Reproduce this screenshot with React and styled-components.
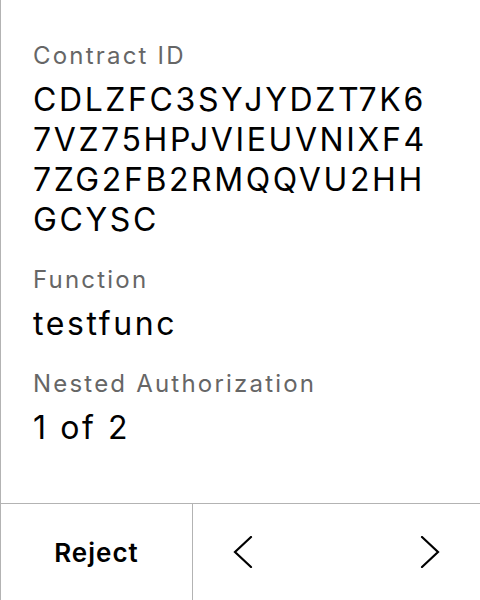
import styled, { createGlobalStyle } from 'styled-components'

const GlobalStyle = createGlobalStyle`
    html, body {
        margin: 0;
        padding: 0;
        background: #ffffff;
    }
    body {
        font-family: "Inter", "Noto Sans", sans-serif;
        -webkit-font-smoothing: antialiased;
    }
`

const Screen = styled.div`
    height: 600px;
    display: flex;
    flex-direction: column;
    border-left: 1px solid #b3b3b3;
    box-sizing: border-box;
    background: #ffffff;
`

const Details = styled.div`
    flex: 1;
    display: flex;
    flex-direction: column;
    gap: 24px;
    padding: 40px 36px 0 32px;
`

const Field = styled.div`
    display: flex;
    flex-direction: column;
    gap: 8px;
`

const Label = styled.div`
    font-size: 24px;
    line-height: 32px;
    letter-spacing: 2.2px;
    color: #666666;
`

const Value = styled.div`
    font-size: 32px;
    line-height: 40px;
    letter-spacing: 2.6px;
    color: #000000;
    word-break: break-all;
`

const Footer = styled.div`
    height: 96px;
    display: flex;
    border-top: 1px solid #b3b3b3;
`

const RejectButton = styled.button`
    width: 192px;
    border: none;
    border-right: 1px solid #b3b3b3;
    background: transparent;
    font-family: "Inter", sans-serif;
    font-size: 26px;
    font-weight: 600;
    letter-spacing: 1px;
    color: #000000;
    padding: 0;
`

const Pager = styled.div`
    flex: 1;
    display: flex;
    align-items: center;
    justify-content: space-between;
    padding: 0 34px;
`

const ArrowButton = styled.button`
    width: 32px;
    height: 32px;
    padding: 0;
    border: none;
    background: transparent;
    display: flex;
    align-items: center;
    justify-content: center;
`

function Chevron({ dir }) {
    const d = dir === 'left' ? 'M24 1 L8 16 L24 31' : 'M8 1 L24 16 L8 31'
    return (
        <svg width="32" height="32" viewBox="0 0 32 32" fill="none">
            <path d={d} stroke="#000" strokeWidth="2.2" strokeLinecap="round" strokeLinejoin="miter" />
        </svg>
    )
}

const fields = [
    { label: 'Contract ID', value: 'CDLZFC3SYJYDZT7K67VZ75HPJVIEUVNIXF47ZG2FB2RMQQVU2HHGCYSC' },
    { label: 'Function', value: 'testfunc' },
    { label: 'Nested Authorization', value: '1 of 2' },
]

export default function App() {
    return (
        <>
            <GlobalStyle />
            <Screen>
                <Details>
                    {fields.map(f => (
                        <Field key={f.label}>
                            <Label>{f.label}</Label>
                            <Value>{f.value}</Value>
                        </Field>
                    ))}
                </Details>
                <Footer>
                    <RejectButton>Reject</RejectButton>
                    <Pager>
                        <ArrowButton><Chevron dir="left" /></ArrowButton>
                        <ArrowButton><Chevron dir="right" /></ArrowButton>
                    </Pager>
                </Footer>
            </Screen>
        </>
    )
}
